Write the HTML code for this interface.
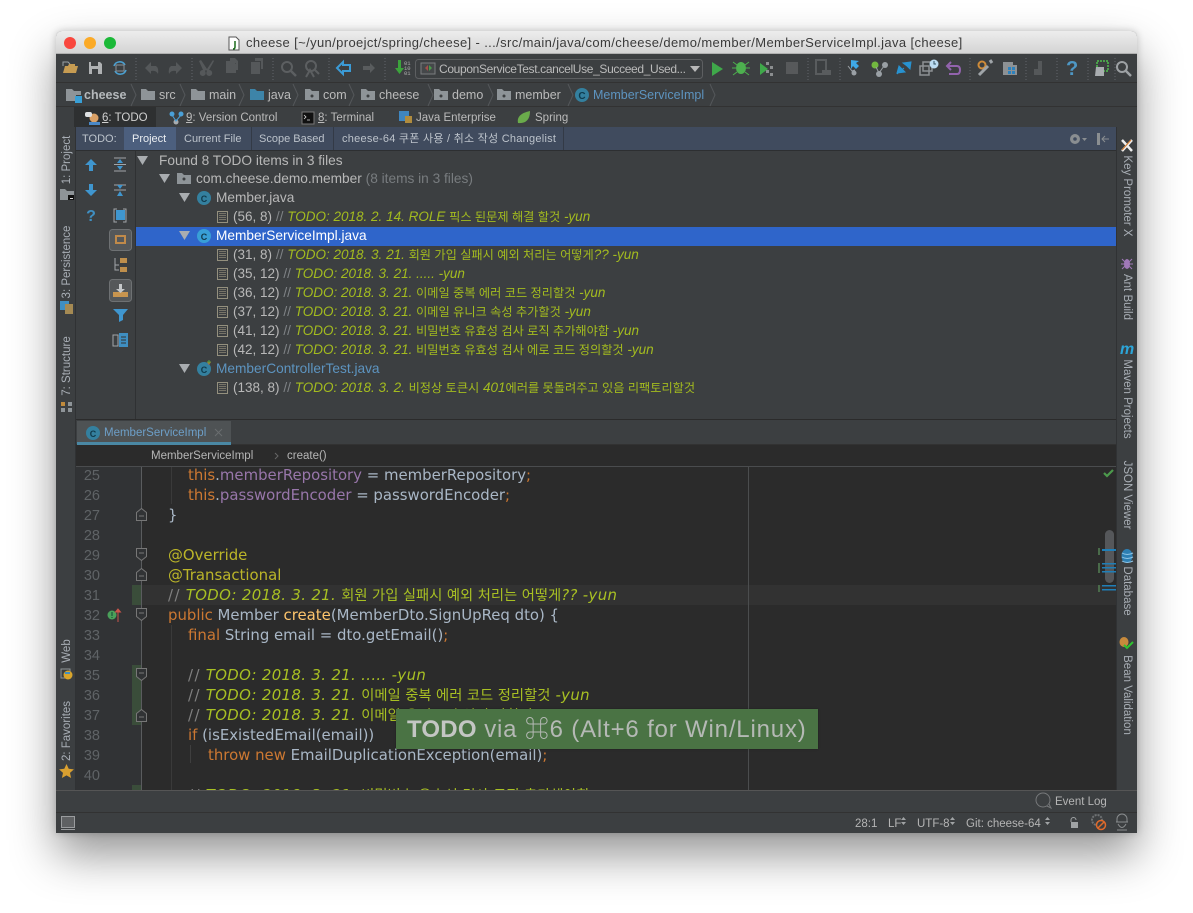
<!DOCTYPE html>
<html lang="ko"><head><meta charset="utf-8"><title>cheese</title>
<style>
html,body{margin:0;padding:0;background:#fff;width:1193px;height:913px;overflow:hidden}
body{font-family:"Liberation Sans","Noto Sans CJK KR",sans-serif;position:relative}
div,span.a{box-sizing:border-box}
.b{position:absolute}
.t{position:absolute;white-space:nowrap;line-height:20px;height:20px}
#win{position:absolute;left:56px;top:31px;width:1081px;height:802px;border-radius:6px 6px 0 0;box-shadow:0 22px 45px rgba(0,0,0,.42),0 0 8px rgba(0,0,0,.2)}
#clip{position:absolute;left:56px;top:31px;width:1081px;height:802px;border-radius:6px 6px 0 0;overflow:hidden;background:#3c3f41}
.o{position:absolute;left:-56px;top:-31px;width:1193px;height:913px}
.nv{font-size:12.5px;color:#bbbbbb}
.tab{font-size:11.5px;color:#bbb}
.tt{font-size:11px;color:#bcc3cb}
.r{font-size:13.7px;color:#b4b4b4}
.l{color:#b8b8b8}.g{color:#7f8386}.d{color:#a3bb1f;font-style:italic;font-size:13.5px}
.loc{font-size:13.5px;color:#b8b8b8}
.k{font-style:normal}
.r .k{font-size:12.2px}
.v{position:absolute;white-space:nowrap;font-size:11.5px;line-height:14px;color:#a9afb6;transform:translate(-50%,-50%) rotate(-90deg)}
.w{position:absolute;white-space:nowrap;font-size:11.5px;line-height:14px;color:#a9afb6;transform:translate(-50%,-50%) rotate(90deg)}
.c{font-family:"DejaVu Sans","Noto Sans CJK KR",sans-serif;font-size:14.9px;color:#a9b7c6}
.c .k{font-size:14.3px;letter-spacing:0}
.c .kw,.kw{color:#cc7832}.f{color:#9876aa}.m{color:#ffc66d}.an{color:#bbb529}
.cm{color:#808080;letter-spacing:1.5px}.td{color:#a8c023;font-style:italic;letter-spacing:.35px}
.n{font-size:14.5px;color:#5f6366;width:24px;text-align:right;left:76px}
.s{font-size:11.5px;color:#b5b5b5}
</style></head><body>
<div id="win"></div>
<div id="clip"><div class="o">
<!-- title bar -->
<div class="b" style="left:56px;top:31px;width:1081px;height:23px;background:linear-gradient(#ededed,#d4d4d4);border-bottom:1px solid #b0b0b0"></div>
<div class="t" style="left:246px;top:33px;font-size:13px;color:#3a3a3a;letter-spacing:.373px">cheese [~/yun/proejct/spring/cheese] - .../src/main/java/com/cheese/demo/member/MemberServiceImpl.java [cheese]</div>
<!-- toolbar -->
<div class="b" style="left:56px;top:54px;width:1081px;height:29px;background:#3c3f41;border-bottom:1px solid #323232"></div>
<!-- nav -->
<div class="b" style="left:56px;top:83px;width:1081px;height:24px;background:#3c3f41;border-bottom:1px solid #323232"></div>
<div class="t nv" style="left:84px;top:85px;font-weight:bold;color:#b5b9bc">cheese</div>
<div class="t nv" style="left:159px;top:85px">src</div>
<div class="t nv" style="left:209px;top:85px">main</div>
<div class="t nv" style="left:268px;top:85px">java</div>
<div class="t nv" style="left:323px;top:85px">com</div>
<div class="t nv" style="left:379px;top:85px">cheese</div>
<div class="t nv" style="left:452px;top:85px">demo</div>
<div class="t nv" style="left:515px;top:85px">member</div>
<div class="t nv" style="left:593px;top:85px;color:#5d94c0">MemberServiceImpl</div>
<!-- tool tabs -->
<div class="b" style="left:74px;top:107px;width:82px;height:20px;background:#2e3031"></div>
<div class="t tab" style="left:102px;top:108px;color:#d0d0d0"><u>6</u>: TODO</div>
<div class="t tab" style="left:186px;top:108px"><u>9</u>: Version Control</div>
<div class="t tab" style="left:318px;top:108px"><u>8</u>: Terminal</div>
<div class="t tab" style="left:416px;top:108px">Java Enterprise</div>
<div class="t tab" style="left:535px;top:108px">Spring</div>
<!-- TODO tabs -->
<div class="b" style="left:76px;top:127px;width:1041px;height:24px;background:#404b5e;border-bottom:1px solid #2d2f31"></div>
<div class="b" style="left:124px;top:127px;width:52px;height:23px;background:#4c5f7e"></div>
<div class="b" style="left:251px;top:127px;width:1px;height:23px;background:#333a46"></div>
<div class="b" style="left:333px;top:127px;width:1px;height:23px;background:#333a46"></div>
<div class="b" style="left:563px;top:127px;width:1px;height:23px;background:#333a46"></div>
<div class="t tt" style="left:82px;top:129px">TODO:</div>
<div class="t tt" style="left:132px;top:129px;color:#eaeef2">Project</div>
<div class="t tt" style="left:184px;top:129px">Current File</div>
<div class="t tt" style="left:259px;top:129px">Scope Based</div>
<div class="t tt" style="left:342px;top:129px;letter-spacing:.25px">cheese-64 쿠폰 사용 / 취소 작성 Changelist</div>
<!-- tree panel -->
<div class="b" style="left:76px;top:151px;width:1041px;height:269px;background:#3c3f41;border-bottom:1px solid #2b2b2b"></div>
<div class="b" style="left:135px;top:151px;width:1px;height:268px;background:#2f3133"></div>
<div class="b" style="left:136px;top:227px;width:980px;height:19px;background:#2f65ca"></div>
<div class="t r" style="left:159px;top:151px"><span class="l">Found 8 TODO items in 3 files</span></div>
<div class="t r" style="left:196px;top:169px"><span class="l">com.cheese.demo.member</span> <span style="color:#787c7f">(8 items in 3 files)</span></div>
<div class="t r" style="left:216px;top:188px"><span class="l">Member.java</span></div>
<div class="t r" style="left:233px;top:207px"><span class="loc">(56, 8)</span> <span class="g">//</span> <span class="d">TODO: 2018. 2. 14. ROLE <span class="k">픽스 된문제 해결 할것</span> -yun</span></div>
<div class="t r" style="left:216px;top:226px;color:#fff">MemberServiceImpl.java</div>
<div class="t r" style="left:233px;top:245px"><span class="loc">(31, 8)</span> <span class="g">//</span> <span class="d">TODO: 2018. 3. 21. <span class="k">회원 가입 실패시 예외 처리는 어떻게</span>?? -yun</span></div>
<div class="t r" style="left:233px;top:264px"><span class="loc">(35, 12)</span> <span class="g">//</span> <span class="d">TODO: 2018. 3. 21. ..... -yun</span></div>
<div class="t r" style="left:233px;top:283px"><span class="loc">(36, 12)</span> <span class="g">//</span> <span class="d">TODO: 2018. 3. 21. <span class="k">이메일 중복 에러 코드 정리할것</span> -yun</span></div>
<div class="t r" style="left:233px;top:302px"><span class="loc">(37, 12)</span> <span class="g">//</span> <span class="d">TODO: 2018. 3. 21. <span class="k">이메일 유니크 속성 추가할것</span> -yun</span></div>
<div class="t r" style="left:233px;top:321px"><span class="loc">(41, 12)</span> <span class="g">//</span> <span class="d">TODO: 2018. 3. 21. <span class="k">비밀번호 유효성 검사 로직 추가해야함</span> -yun</span></div>
<div class="t r" style="left:233px;top:340px"><span class="loc">(42, 12)</span> <span class="g">//</span> <span class="d">TODO: 2018. 3. 21. <span class="k">비밀번호 유효성 검사 에로 코드 정의할것</span> -yun</span></div>
<div class="t r" style="left:216px;top:359px;color:#5d94c0">MemberControllerTest.java</div>
<div class="t r" style="left:233px;top:378px"><span class="loc">(138, 8)</span> <span class="g">//</span> <span class="d">TODO: 2018. 3. 2. <span class="k">비정상 토큰시</span> 401<span class="k">에러를 못돌려주고 있음 리팩토리할것</span></span></div>
<!-- editor tab bar -->
<div class="b" style="left:76px;top:420px;width:1041px;height:25px;background:#3c3f41;border-bottom:1px solid #323232"></div>
<div class="b" style="left:77px;top:421px;width:154px;height:24px;background:#4e5254;border-bottom:3px solid #4a88a4"></div>
<div class="t" style="left:104px;top:423px;font-size:11.5px;color:#6d9fc8">MemberServiceImpl</div>
<!-- breadcrumb -->
<div class="b" style="left:76px;top:445px;width:1041px;height:22px;background:#2b2b2b;border-bottom:1px solid #4a4c4e"></div>
<div class="t" style="left:151px;top:446px;font-size:11.5px;color:#b6b6b6">MemberServiceImpl</div>
<div class="t" style="left:287px;top:446px;font-size:11.5px;color:#b6b6b6">create()</div>
<!-- editor -->
<div class="b" style="left:76px;top:467px;width:1041px;height:323px;background:#2b2b2b;overflow:hidden"></div>
<div class="b" style="left:76px;top:467px;width:66px;height:323px;background:#313335"></div>
<div class="b" style="left:142px;top:585px;width:975px;height:20px;background:#323232"></div>
<div class="b" style="left:132px;top:585px;width:10px;height:20px;background:#3a4d3a"></div>
<div class="b" style="left:132px;top:665px;width:10px;height:60px;background:#3a4d3a"></div>
<div class="b" style="left:132px;top:785px;width:10px;height:5px;background:#3a4d3a"></div>
<div class="b" style="left:141px;top:467px;width:1px;height:323px;background:#5a5c5e"></div>
<div class="b" style="left:748px;top:467px;width:1px;height:323px;background:#4b4d4e"></div>
<div class="b" style="left:171px;top:467px;width:1px;height:37px;background:#3a3a3a"></div>
<div class="b" style="left:171px;top:625px;width:1px;height:165px;background:#3a3a3a"></div>
<div class="b" style="left:190px;top:745px;width:1px;height:18px;background:#3f3f3f"></div>
<div class="t n" style="top:466px">25</div><div class="t n" style="top:486px">26</div><div class="t n" style="top:506px">27</div><div class="t n" style="top:526px">28</div><div class="t n" style="top:546px">29</div><div class="t n" style="top:566px">30</div><div class="t n" style="top:586px">31</div><div class="t n" style="top:606px">32</div><div class="t n" style="top:626px">33</div><div class="t n" style="top:646px">34</div><div class="t n" style="top:666px">35</div><div class="t n" style="top:686px">36</div><div class="t n" style="top:706px">37</div><div class="t n" style="top:726px">38</div><div class="t n" style="top:746px">39</div><div class="t n" style="top:766px">40</div>
<div class="t c" style="left:188px;top:465px"><span class="kw">this</span>.<span class="f">memberRepository</span> = memberRepository<span class="kw">;</span></div>
<div class="t c" style="left:188px;top:485px"><span class="kw">this</span>.<span class="f">passwordEncoder</span> = passwordEncoder<span class="kw">;</span></div>
<div class="t c" style="left:168px;top:505px">}</div>
<div class="t c an" style="left:168px;top:545px;color:#bbb529">@Override</div>
<div class="t c an" style="left:168px;top:565px;color:#bbb529">@Transactional</div>
<div class="t c" style="left:168px;top:585px"><span class="cm">//</span> <span class="td">TODO: 2018. 3. 21. <span class="k">회원 가입 실패시 예외 처리는 어떻게</span>?? -yun</span></div>
<div class="t c" style="left:168px;top:605px"><span class="kw">public</span> Member <span class="m">create</span>(MemberDto.SignUpReq dto) {</div>
<div class="t c" style="left:188px;top:625px"><span class="kw">final</span> String email = dto.getEmail()<span class="kw">;</span></div>
<div class="t c" style="left:188px;top:665px"><span class="cm">//</span> <span class="td">TODO: 2018. 3. 21. ..... -yun</span></div>
<div class="t c" style="left:188px;top:685px"><span class="cm">//</span> <span class="td">TODO: 2018. 3. 21. <span class="k">이메일 중복 에러 코드 정리할것</span> -yun</span></div>
<div class="t c" style="left:188px;top:705px"><span class="cm">//</span> <span class="td">TODO: 2018. 3. 21. <span class="k">이메일 유니크 속성 추가할것</span> -yun</span></div>
<div class="t c" style="left:188px;top:725px"><span class="kw">if</span> (isExistedEmail(email))</div>
<div class="t c" style="left:208px;top:745px"><span class="kw">throw new</span> EmailDuplicationException(email)<span class="kw">;</span></div>
<div class="t c" style="left:188px;top:785px"><span class="cm">//</span> <span class="td">TODO: 2018. 3. 21. <span class="k">비밀번호 유효성 검사 로직 추가해야함</span> -yun</span></div>
<!-- status -->
<div class="b" style="left:56px;top:790px;width:1081px;height:23px;background:#3c3f41;border-top:1px solid #555;border-bottom:1px solid #323232"></div>
<div class="b" style="left:56px;top:813px;width:1081px;height:20px;background:#3c3f41"></div>
<div class="t s" style="left:1055px;top:792px">Event Log</div>
<div class="t s" style="left:855px;top:814px">28:1</div>
<div class="t s" style="left:888px;top:814px">LF</div>
<div class="t s" style="left:917px;top:814px">UTF-8</div>
<div class="t s" style="left:966px;top:814px">Git: cheese-64</div>
<!-- strips -->
<div class="b" style="left:56px;top:127px;width:20px;height:663px;background:#3c3f41;border-right:1px solid #303234"></div>
<div class="b" style="left:1116px;top:127px;width:21px;height:663px;background:#3c3f41;border-left:1px solid #303234"></div>
<div class="v" style="left:67px;top:160px">1: Project</div>
<div class="v" style="left:67px;top:262px">3: Persistence</div>
<div class="v" style="left:67px;top:366px">7: Structure</div>
<div class="v" style="left:67px;top:651px">Web</div>
<div class="v" style="left:67px;top:731px">2: Favorites</div>
<div class="w" style="left:1127px;top:196px">Key Promoter X</div>
<div class="w" style="left:1127px;top:297px">Ant Build</div>
<div class="w" style="left:1127px;top:399px">Maven Projects</div>
<div class="w" style="left:1127px;top:495px">JSON Viewer</div>
<div class="w" style="left:1127px;top:591px">Database</div>
<div class="w" style="left:1127px;top:695px">Bean Validation</div>

<!-- icons -->
<svg class="b" style="left:0;top:0" width="1193" height="913" viewBox="0 0 1193 913">
<defs>
<path id="fo" d="M0 1h5l2 2h7v9H0z"/>
<g id="note"><rect x=".5" y=".5" width="10" height="11" fill="#3c3f41" stroke="#94907e"/><path d="M2 2.500h7M2 4.500h7M2 6.500h7M2 8.500h7" stroke="#8b8775" stroke-width=".8"/></g>
<path id="arr" d="M0 0h11l-5.500 9z" fill="#a9adb0"/>
<path id="dn" d="M.5 .5h10v8l-5 4-5-4zM3 5h5" fill="#313335" stroke="#777"/>
<path id="up" d="M.5 12.500h10v-8l-5-4-5 4zM3 8h5" fill="#313335" stroke="#777"/>
</defs>
<!-- traffic -->
<circle cx="70" cy="43" r="6" fill="#f9473e"/><circle cx="90" cy="43" r="6" fill="#fbaa27"/><circle cx="110" cy="43" r="6" fill="#1bb938"/>
<path d="M229 37h7l3 3v10h-10z" fill="#fff" stroke="#555"/><path d="M235 41v6q0 2-2 2" stroke="#1a6b1a" stroke-width="1.500" fill="none"/>
<!-- toolbar -->
<path d="M63 73l2-7h3l1-2h6v2h3l-2 7z" fill="#c79c52"/><path d="M63 66v-4h5l2 2" fill="none" stroke="#9aa0a5"/>
<path d="M89 62h11l2 2v10H89z" fill="#afb1b3"/><rect x="91" y="62" width="7" height="4" fill="#3c3f41"/><rect x="92" y="69" width="6" height="5" fill="#3c3f41"/>
<path d="M114 66a6 6 0 0 1 11-1M126 70a6 6 0 0 1-11 1" fill="none" stroke="#4a9fd0" stroke-width="1.600"/><rect x="116" y="65" width="8" height="6" fill="none" stroke="#8a9097"/>
<g fill="#55585a"><path d="M145 68l6-6v4h5q3 2 2 8-2-4-7-3v3z"/><path d="M182 68l-6-6v4h-5q-3 2-2 8 2-4 7-3v3z"/>
<path d="M201 60l6 9 6-9 1 1-5 9a3 3 0 1 1-2 1l-1-1-1 1a3 3 0 1 1-2-1l-4-9z"/>
<path d="M226 61h7l3 3v9h-10z"/><path d="M251 62h9v12h-9z"/><path d="M230 58h5l3 3v9h-2v-7h-6z"/><path d="M255 58h8v11h-2v-8h-6z"/></g>
<circle cx="287" cy="67" r="5" fill="none" stroke="#5c5f61" stroke-width="2"/><path d="M291 71l5 5" stroke="#5c5f61" stroke-width="2.500"/>
<circle cx="311" cy="66" r="5" fill="none" stroke="#5c5f61" stroke-width="2"/><path d="M315 70l4 4M306 77l4-7 4 7" stroke="#5c5f61" stroke-width="2" fill="none"/>
<path d="M337 68l6-6v3h7v6h-7v3z" fill="none" stroke="#3b9bd6" stroke-width="2"/>
<path d="M375 68l-5-5v3h-7v4h7v3z" fill="#595c5e"/>
<path d="M398 60h3v8h3l-4.500 6-4.500-6h3z" fill="#3ca33c"/>
<text x="404" y="65" font-size="5.500" fill="#b0b0b0" font-family="Liberation Mono">01</text><text x="404" y="70" font-size="5.500" fill="#b0b0b0" font-family="Liberation Mono">10</text><text x="404" y="75" font-size="5.500" fill="#b0b0b0" font-family="Liberation Mono">01</text>
<rect x="415.500" y="59.500" width="287" height="19" rx="3" fill="#3c3f41" stroke="#5d5f61"/>
<rect x="421" y="63" width="14" height="11" fill="#45484a" stroke="#7a7d7f"/><path d="M428 65l-3 3 3 3z" fill="#a4504a"/><path d="M429 65l3 3-3 3z" fill="#4a9a4a"/>
<text x="439" y="73" font-size="12" fill="#bbbbbb" font-family="Liberation Sans" textLength="247" lengthAdjust="spacing">CouponServiceTest.cancelUse_Succeed_Used...</text>
<path d="M690 66h10l-5 6z" fill="#b8b8b8"/>
<path d="M712 62l11 7-11 7z" fill="#3fa84a"/>
<ellipse cx="741" cy="68" rx="5" ry="6" fill="#4db04f"/><path d="M733 62l4 3M749 62l-4 3M732 68h4M750 68h-4M733 75l4-3M749 75l-4-3" stroke="#4db04f"/>
<path d="M760 63l8 6-8 6z" fill="#3fa84a"/><g fill="#8b8e90"><rect x="766" y="62" width="3" height="3"/><rect x="770" y="66" width="3" height="3"/><rect x="766" y="70" width="3" height="3"/><rect x="770" y="73" width="3" height="3"/></g>
<rect x="786" y="62" width="12" height="12" fill="#57595b"/>
<path d="M816 60h10v14h-10z" fill="none" stroke="#595c5e" stroke-width="2"/><path d="M822 70h9v5h-9z" fill="#595c5e"/>
<path d="M851 60l8 1-3 2 3 3-3 3-3-3-2 3z" fill="#3fa9e6"/><path d="M848 66l4 5 3-1" stroke="#9aa0a5" fill="none"/><circle cx="854" cy="73" r="2.500" fill="#9aa0a5"/>
<circle cx="875" cy="65" r="3.500" fill="#72b83f"/><circle cx="885" cy="65" r="3" fill="#9aa0a5"/><circle cx="879" cy="74" r="3" fill="#9aa0a5"/><path d="M876 67l3 6 5-7" stroke="#9aa0a5" fill="none"/>
<path d="M897 74l7-6M903 63l8-1-1 7-3-3zM897 73l8-1-3-3-3-3z" fill="#2892d0" stroke="#2892d0"/>
<rect x="923" y="62" width="9" height="9" fill="none" stroke="#8d9194" stroke-width="1.500"/><rect x="920" y="66" width="9" height="9" fill="none" stroke="#8d9194" stroke-width="1.500"/><circle cx="934" cy="64" r="4.500" fill="#bcdcf2"/><path d="M934 61v3h2" stroke="#356" fill="none"/>
<path d="M951 62l-4 4 4 4M948 66h9q3 0 3 4t-3 4h-8" fill="none" stroke="#9263ad" stroke-width="2"/>
<circle cx="982" cy="65" r="3.500" fill="none" stroke="#cf8b38" stroke-width="2"/><path d="M979 75l9-9M990 60l2 3" stroke="#9fa4a8" stroke-width="3"/>
<path d="M1003 62h10v3h4v10h-14z" fill="#8d9194"/><g fill="#2d82bd"><rect x="1008" y="67" width="3" height="3"/><rect x="1012" y="67" width="3" height="3"/><rect x="1008" y="71" width="3" height="3"/><rect x="1012" y="71" width="3" height="3"/></g>
<path d="M1038 61h4v8h-4zM1034 69h8v6h-8z" fill="#55585a"/>
<text x="1066" y="75" font-size="20" font-weight="bold" fill="#4e97c4" font-family="Liberation Sans">?</text>
<rect x="1097" y="61" width="11" height="10" fill="none" stroke="#4aa04a" stroke-width="2" stroke-dasharray="2 1"/><path d="M1096 67h8v9h-9z" fill="#a9adb0"/>
<circle cx="1122" cy="67" r="5" fill="none" stroke="#9da1a4" stroke-width="2"/><path d="M1126 71l5 5" stroke="#9da1a4" stroke-width="2.500"/>
<g stroke="#62656a" stroke-dasharray="1 2"><path d="M136 58v22M192 58v22M273 58v22M329 58v22M385 58v22M808 58v22M840 58v22M970 58v22M1026 58v22M1057 58v22M1088 58v22M1115 58v22"/></g>
<!-- nav icons -->
<g fill="#8e9498"><path d="M66 89h6l2 2h7v4h-5v6H66z"/><use href="#fo" x="141" y="88"/><use href="#fo" x="191" y="88"/><use href="#fo" x="305" y="88"/><use href="#fo" x="361" y="88"/><use href="#fo" x="434" y="88"/><use href="#fo" x="497" y="88"/></g>
<rect x="75" y="96" width="7" height="7" fill="#389fd6"/>
<use href="#fo" x="250" y="88" fill="#3d84a8"/>
<g fill="#3c3f41"><circle cx="312" cy="96" r="1.500"/><circle cx="368" cy="96" r="1.500"/><circle cx="441" cy="96" r="1.500"/><circle cx="504" cy="96" r="1.500"/></g>
<g fill="none" stroke="#54575a"><path d="M131 84l5 11-5 11M180 84l5 11-5 11M239 84l5 11-5 11M293 84l5 11-5 11M349 84l5 11-5 11M428 84l5 11-5 11M488 84l5 11-5 11M568 84l5 11-5 11M710 84l5 11-5 11"/></g>
<circle cx="582" cy="95" r="7" fill="#34809f"/><text x="582" y="99" font-size="10" fill="#0e3a4d" text-anchor="middle" font-weight="bold">C</text>
<!-- tool tab icons -->
<circle cx="94" cy="118" r="4.500" fill="#d9a066"/><path d="M89 125h11v-3h-11z" fill="#4a88c7"/><rect x="85" y="112" width="7" height="5" rx="2" fill="#dfe1e2"/>
<circle cx="172" cy="114" r="2.500" fill="#4aa0d8"/><circle cx="181" cy="114" r="2.500" fill="#4aa0d8"/><circle cx="176" cy="122" r="2.500" fill="#a9adb0"/><path d="M172 115l4 6 5-6" fill="none" stroke="#4aa0d8"/>
<rect x="302" y="112" width="12" height="12" fill="#111" stroke="#777"/><path d="M304 115l2 2-2 2M307 120h3" stroke="#ddd" fill="none" stroke-width=".8"/>
<rect x="399" y="111" width="10" height="10" fill="#3e86c0"/><rect x="405" y="116" width="7" height="7" fill="#b08c3e"/>
<path d="M518 123q-2-9 12-12 0 13-12 12z" fill="#6aab4b"/>
<!-- tab-row right icons -->
<circle cx="1075" cy="139" r="5" fill="#8a8e91"/><circle cx="1075" cy="139" r="1.800" fill="#404b5e"/><path d="M1082 138h5l-2.500 3z" fill="#8a8e91"/>
<rect x="1097" y="133" width="3" height="12" fill="#8a8e91"/><path d="M1102 139h7M1105 136l-3 3 3 3" fill="none" stroke="#8a8e91"/>
<!-- todo left toolbar -->
<path d="M91 159l-6 6h4v6h4v-6h4z" fill="#3f96cf"/><path d="M91 196l-6-6h4v-6h4v6h4z" fill="#3f96cf"/>
<text x="91" y="221" font-size="16" font-weight="bold" fill="#3f8fc2" text-anchor="middle">?</text>
<g fill="none" stroke="#a2a6a9"><path d="M114 158h12M114 171h12"/></g><path d="M120 159l-3 4h6zM120 170l-3-4h6z" fill="#3f96cf"/><rect x="114" y="164" width="12" height="1" fill="#a2a6a9"/>
<path d="M114 190h12M114 185h12" stroke="#a2a6a9" fill="none"/><path d="M120 189l-3-4h6zM120 191l-3 5h6z" fill="#3f96cf"/>
<path d="M117 209h-3v13h3M123 209h3v13h-3" fill="none" stroke="#a2a6a9"/><rect x="116" y="210" width="9" height="10" fill="#3f96cf"/>
<rect x="109.500" y="229.500" width="22" height="21" rx="3" fill="#55585a" stroke="#6e7173"/><rect x="115" y="235" width="11" height="9" fill="#c08a4a"/><rect x="117" y="237" width="7" height="5" fill="#55585a"/>
<path d="M115 258v12h4M115 265h4" fill="none" stroke="#a2a6a9"/><rect x="120" y="258" width="7" height="5" fill="#bf8f4c"/><rect x="120" y="267" width="7" height="5" fill="#bf8f4c"/>
<rect x="109.500" y="279.500" width="22" height="22" rx="3" fill="#55585a" stroke="#6e7173"/><path d="M113 292h15v5h-15z" fill="#c8954f"/><path d="M119 284h3v5h3l-4.500 4-4.500-4h3z" fill="#c5c8ca"/>
<path d="M113 309h15l-5 6v5l-4 2v-7z" fill="#3f96cf"/>
<rect x="113" y="335" width="5" height="11" fill="none" stroke="#a2a6a9"/><rect x="119" y="333" width="9" height="14" fill="#3f8fc2"/><path d="M121 337h5M121 340h5M121 343h5" stroke="#333"/>
<!-- tree -->
<use href="#arr" x="137" y="156"/><use href="#arr" x="159" y="174"/><use href="#arr" x="179" y="193"/><use href="#arr" x="179" y="231"/><use href="#arr" x="179" y="364"/>
<use href="#fo" x="177" y="172" fill="#8e9498"/><circle cx="184" cy="179" r="1.500" fill="#3c3f41"/>
<circle cx="204" cy="198" r="7" fill="#34809f"/><text x="204" y="202" font-size="9" fill="#10394a" text-anchor="middle" font-weight="bold">C</text>
<circle cx="204" cy="236" r="7" fill="#389fd6"/><text x="204" y="240" font-size="9" fill="#10394a" text-anchor="middle" font-weight="bold">C</text>
<circle cx="204" cy="369" r="7" fill="#34809f"/><text x="204" y="373" font-size="9" fill="#10394a" text-anchor="middle" font-weight="bold">C</text><path d="M207 362l2 3 2-3z" fill="#e05a2b"/><path d="M209 360v4M207 362h4" stroke="#5aa03c"/>
<use href="#note" x="217" y="211"/><use href="#note" x="217" y="249"/><use href="#note" x="217" y="268"/><use href="#note" x="217" y="287"/><use href="#note" x="217" y="306"/><use href="#note" x="217" y="325"/><use href="#note" x="217" y="344"/><use href="#note" x="217" y="382"/>
<!-- editor tab -->
<circle cx="93" cy="433" r="7" fill="#34809f"/><text x="93" y="437" font-size="9" fill="#10394a" text-anchor="middle" font-weight="bold">C</text>
<path d="M215 429l7 7M222 429l-7 7" stroke="#6a6d6f"/>
<path d="M275 453l3 3-3 3" fill="none" stroke="#666"/>
<!-- folds -->
<use href="#up" x="136" y="508"/><use href="#dn" x="136" y="548"/><use href="#up" x="136" y="568"/><use href="#dn" x="136" y="608"/><use href="#dn" x="136" y="668"/><use href="#up" x="136" y="709"/>
<!-- gutter marks -->
<circle cx="112" cy="615" r="4.500" fill="#4aa05a"/><path d="M112 612v4M112 617v1" stroke="#143"/><path d="M118 609l-2.500 3h5zM118 612v10" fill="#c9544a" stroke="#c9544a"/>
<!-- check, stripes -->
<path d="M1104 473l3 3 6-6" fill="none" stroke="#4c9a4c" stroke-width="2.200"/>
<rect x="1105" y="530" width="9" height="53" rx="4.500" fill="#55575a"/>
<g fill="#4a6b4a"><rect x="1098" y="548" width="2" height="7"/><rect x="1098" y="563" width="2" height="10"/><rect x="1098" y="585" width="2" height="7"/></g>
<g fill="#1f7fb8"><rect x="1102" y="549" width="14" height="2"/><rect x="1102" y="563" width="14" height="1.500"/><rect x="1102" y="567" width="14" height="1.500"/><rect x="1102" y="571" width="14" height="1.500"/><rect x="1102" y="585" width="14" height="1.500"/><rect x="1102" y="589" width="14" height="1.500"/></g>
<!-- strip icons -->
<use href="#fo" x="60" y="188" fill="#8e9498"/><rect x="68" y="195" width="6" height="5" fill="#111"/><rect x="70" y="198" width="3" height="1" fill="#ddd"/>
<rect x="60" y="301" width="9" height="9" fill="#3f8fc2"/><rect x="65" y="304" width="8" height="10" fill="#a58a53"/>
<g fill="#8e9498"><rect x="61" y="402" width="4" height="4" fill="#c08a3c"/><rect x="68" y="402" width="4" height="4"/><rect x="61" y="408" width="4" height="4"/><rect x="68" y="408" width="4" height="4"/></g>
<rect x="61" y="669" width="9" height="9" fill="none" stroke="#8e9498"/><circle cx="68" cy="675" r="4.500" fill="#d8a52c"/><path d="M65 673h5" stroke="#3f8fc2" stroke-width="2"/>
<path d="M66.500 764l2.200 4.800 5.200.6-3.900 3.500 1.100 5.100-4.600-2.600-4.600 2.600 1.100-5.100-3.900-3.500 5.200-.6z" fill="#d9a030"/>
<path d="M1122 140l10 11M1132 140l-10 11" stroke="#eee" stroke-width="2.500"/><path d="M1122 150l9-10" stroke="#d87a2a"/>
<ellipse cx="1127" cy="264" rx="3" ry="5" fill="#a078b8"/><path d="M1122 259l10 10M1132 259l-10 10M1121 264h12" stroke="#a078b8"/>
<text x="1120" y="354" font-size="16" font-weight="bold" font-style="italic" fill="#2ca5d8">m</text>
<ellipse cx="1127" cy="556" rx="5.500" ry="7" fill="#2d7fb3"/><path d="M1122 553q5 3 11 0M1122 557q5 3 11 0M1122 561q5 3 11 0" stroke="#8fc5e6" fill="none"/>
<ellipse cx="1124" cy="642" rx="4.500" ry="5" fill="#c78a3c"/><path d="M1124 645l3 3 6-6" fill="none" stroke="#2fc42f" stroke-width="2"/>
<!-- status icons -->
<rect x="61.500" y="816.500" width="13" height="11" fill="#5f6163" stroke="#9a9c9e"/><path d="M61 829.500h14" stroke="#9a9c9e"/>
<circle cx="1043" cy="800" r="7" fill="none" stroke="#77797b"/><path d="M1047 806l4 2-2-4" fill="#3c3f41" stroke="#77797b"/>
<g fill="#a0a3a5"><path d="M901 820h5l-2.500-3zM901 822h5l-2.500 3z"/><path d="M950 820h5l-2.500-3zM950 822h5l-2.500 3z"/><path d="M1045 820h5l-2.500-3zM1045 822h5l-2.500 3z"/></g>
<rect x="1071" y="822" width="7" height="6" fill="#a0a3a5"/><path d="M1071 822v-2a2.500 2.500 0 0 1 5 0" fill="none" stroke="#a0a3a5"/>
<circle cx="1097" cy="820" r="5" fill="none" stroke="#6e7173" stroke-width="2" stroke-dasharray="2 1"/><circle cx="1101" cy="825" r="4.500" fill="#3c3f41" stroke="#e06a2b" stroke-width="1.500"/><path d="M1098 828l6-6" stroke="#e06a2b" stroke-width="1.500"/>
<path d="M1117 822v-3a5 5 0 0 1 10 0v3zM1116 822h12M1118 824q4 7 8 0M1117 830h10" fill="none" stroke="#8a8d8f"/>
</svg>
<!-- tooltip -->
<div class="b" style="left:396px;top:709px;width:422px;height:40px;background:#4a7344;box-shadow:0 0 2px rgba(0,0,0,.3)"></div>
<div class="t" style="left:407px;top:720px;font-size:24px;color:#b5b9b5;line-height:20px;letter-spacing:.82px"><b style="color:#c3c6c3;letter-spacing:.2px">TODO</b> via ⌘6 (Alt+6 for Win/Linux)</div>
</div></div>
</body></html>
